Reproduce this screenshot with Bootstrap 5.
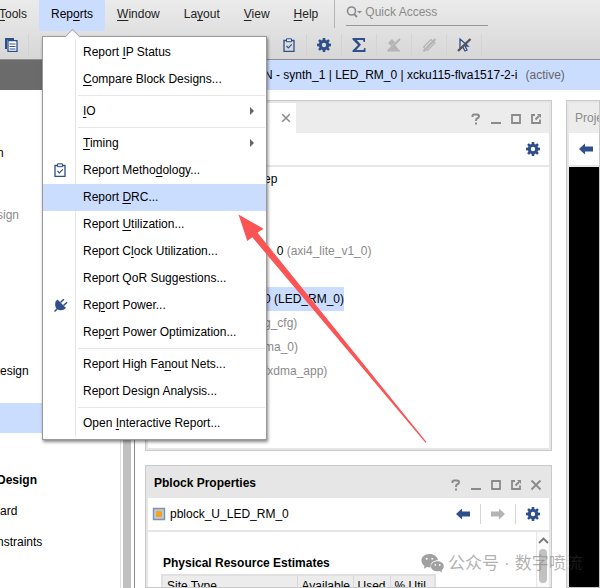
<!DOCTYPE html>
<html lang="en">
<head>
<meta charset="utf-8">
<meta name="viewport" content="width=device-width, initial-scale=1">
<title>Device Design Suite</title>
<link href="https://cdn.jsdelivr.net/npm/bootstrap@5.3.0/dist/css/bootstrap.min.css" rel="stylesheet">
<style>
:root{--sel:#cbddff;--ink:#2f4f8a;--mute:#8a8a8a;--line:#e6e6e6}
body{font:12px/16px "Liberation Sans",Arial,sans-serif;color:#000;background:#fff}
button{font:inherit;color:inherit;background:none;border:0;padding:0}
svg{display:block;flex:none}
u{text-underline-offset:2px}
.topbar{background:linear-gradient(#ebebeb,#d7d7d7);border-bottom:1px solid #8e8e8e}
.menubar{height:31px;margin-left:-13px;color:#222}
.menubar .entry{height:31px;padding:0 12px 3px}
.entry.open{background:var(--sel);color:#000}
.search{width:142px;height:26px;margin-left:11px;padding-bottom:2px;border-bottom:1px solid #999;color:var(--mute)}
.search input{font:inherit;width:110px;border:0;padding:0;background:none;outline:0}
.search input::placeholder{color:var(--mute);opacity:1}
.rule{width:1px;height:28px;background:#b5b5b5}
.tools{height:28px;color:var(--ink)}
.tools button{width:35px;height:22px;border-right:1px solid #d3d3d3;display:flex;align-items:center;justify-content:center}
.tools .off{color:#b4b4b4}
.tools .first{width:29px;padding-right:5px}
.tools .gapfill{width:243px}
.reports-menu{left:3px;top:36px;z-index:20;width:225px;padding:2px 0;background:#fff;border:1px solid #999;box-shadow:1px 2px 3px #0007;color:#000}
.reports-menu::before{content:"";position:absolute;left:24px;top:-6px;width:11px;height:11px;background:#fff;border:solid #aaa;border-width:1px 0 0 1px;transform:rotate(45deg)}
.reports-menu::after{content:"";position:absolute;left:32px;top:2px;bottom:2px;width:1px;background:var(--line)}
.cmd{height:27px;width:100%;padding-bottom:2px!important;display:flex;align-items:center;text-align:left;position:relative;z-index:1}
.cmd .ico{width:33px;color:var(--ink);padding-left:11px}
.cmd .lbl{flex:1;padding-left:7px}
.cmd .sub{margin-right:12px;border:solid transparent;border-width:4px 0 4px 4px;border-left-color:#666}
.cmd.on{background:var(--sel)}
.cut{height:1px;margin:2px 1px 2px 35px;background:var(--line)}
.side{width:121px;border-right:1px solid #ddd}
.side .cap{height:30px;background:#6b6b6b;width:135px}
.step{height:31px;display:flex;align-items:center}
.step.clip{margin-left:-3px}
.step.on{height:30px;background:var(--sel);margin-top:17px}
.s1{margin-top:47px}.s2{margin-top:31px}.s3{margin-top:125px}
.track{width:14px;padding:0 3px 0 2px;border-right:1px solid #8e8e8e}
.track div{background:#c0c0c0;height:100%}
.title{height:30px;background:var(--sel);padding-left:129px}
.title .state{color:#666}
.pane{border:1px solid #c9c9c9;background:var(--line);padding:2px}
.pane .head{height:30px;background:#ececec;color:var(--mute)}
.pane .bar{height:32px;background:#fff;color:var(--ink);padding-right:9px}
.pane .inner{background:#fff;margin-top:2px}
.desk{gap:14px;padding:10px 0 0 10px}
.mid{width:407px;gap:14px}
.netlist{height:351px}
.netlist .tab{width:148px;height:30px;background:#fff;padding-right:5px}
.props .head{background:var(--line);padding-left:6px}
.wins{gap:8px;padding-right:7px}
.netlist .wins{padding-top:3px}
.trow{height:24px;padding-left:116px;display:flex;align-items:center;white-space:pre}
.trow .pick{height:24px;line-height:24px;background:var(--sel)}
.g{color:var(--mute)}
.vr1{width:1px;height:20px;margin:0 10px;background:#d5d5d5}
.fwd{color:#b4b4b4}
.device .head{padding-left:6px}
.device .bar{padding-left:10px}
.device .inner{background:#000}
.facts{padding:23px 0 0 13px}
.facts b{padding-left:2px}
.est{table-layout:fixed;margin-top:3px;border:2px solid #e0e0e0;border-bottom:0;width:275px;background:#ececec}
.est th{font-weight:400;padding:2px 0 0 4px;border-right:1px solid #d8d8d8;white-space:nowrap}
.c1{width:135px}.c2{width:56px}.c3{width:37px}
.sb{width:13px;border-left:1px solid var(--line);background:#fafafa}
.sb div{width:8px;height:34px;border-radius:4px;background:#c1c1c1}
.arrow{left:230px;top:206px;z-index:30;pointer-events:none}
.wm{left:421px;bottom:12px;z-index:25;font:17px/24px "Noto Sans CJK SC",sans-serif;color:#8e8e8eb0;white-space:nowrap}
.wm .dot{padding:0 5px;font-family:"Liberation Sans",sans-serif}
.wm .fade-end{color:#8e8e8e30}
</style>
<script src="https://cdn.jsdelivr.net/npm/bootstrap@5.3.0/dist/js/bootstrap.bundle.min.js"></script>
</head>
<body>
<svg width="0" height="0" class="position-absolute" aria-hidden="true">
<symbol id="gear" viewBox="0 0 14 14"><path fill="currentColor" fill-rule="evenodd" d="M5.8 0h2.4l.3 2 1 .4L11.200 1.200l1.600 1.600L11.600 4.500l.4 1 2 .3v2.400l-2 .3-.4 1 1.200 1.700-1.600 1.600-1.700-1.200-1 .4-.3 2H5.800l-.3-2-1-.4-1.700 1.200-1.600-1.600 1.200-1.700-.4-1-2-.3V5.800l2-.3.4-1L1.200 2.800l1.600-1.600 1.700 1.200 1-.4zM7 4.800a2.200 2.200 0 1 0 0 4.400 2.200 2.200 0 0 0 0-4.400z"/></symbol>
<symbol id="clip" viewBox="0 0 12 14"><path fill="none" stroke="currentColor" stroke-width="1.300" d="M1 2.500h10v10.800H1z"/><path fill="#e8ecf4" stroke="currentColor" d="M3.500.8h5v2.900h-5z"/><path fill="none" stroke="currentColor" stroke-width="1.200" d="M3.500 8l1.800 1.800L8.800 6.300"/></symbol>
<symbol id="back" viewBox="0 0 14 12"><path fill="currentColor" d="M0 6l6-5.500V3.500h8v5H6v3z"/></symbol>
<symbol id="help" viewBox="0 0 12 12"><path fill="none" stroke="currentColor" stroke-width="2" d="M2.500 4V2.500Q2.800 1.500 4 1.500h3Q9 1.700 9 3.300T7 5.500Q6 6 6 8M6 9.500v2"/></symbol>
<symbol id="min" viewBox="0 0 12 12"><path fill="currentColor" d="M1 9h10v2H1z"/></symbol>
<symbol id="max" viewBox="0 0 12 12"><path fill="none" stroke="currentColor" stroke-width="1.800" d="M2 2h8v8H2z"/></symbol>
<symbol id="pop" viewBox="0 0 12 12"><path fill="none" stroke="currentColor" stroke-width="1.800" d="M5 2H2v8h8V6.500M5.500 6.500L9 3"/><path fill="currentColor" d="M7 1h4v4z"/></symbol>
<symbol id="close" viewBox="0 0 12 12"><path fill="none" stroke="currentColor" stroke-width="1.800" d="M1.500 1.500l9 9m0-9l-9 9"/></symbol>
</svg>
<div class="vh-100 d-flex flex-column overflow-hidden position-relative">
<header class="topbar">
<nav class="menubar d-flex" aria-label="Main menu">
<button class="entry"><u>T</u>ools</button>
<div class="position-relative">
<button class="entry open">Rep<u>o</u>rts</button>
<div class="reports-menu position-absolute">
<button class="cmd"><span class="ico"></span><span class="lbl">Report <u>I</u>P Status</span></button>
<button class="cmd"><span class="ico"></span><span class="lbl"><u>C</u>ompare Block Designs...</span></button>
<div class="cut"></div>
<button class="cmd"><span class="ico"></span><span class="lbl"><u>I</u>O</span><span class="sub"></span></button>
<div class="cut"></div>
<button class="cmd"><span class="ico"></span><span class="lbl"><u>T</u>iming</span><span class="sub"></span></button>
<button class="cmd"><span class="ico"><svg width="12" height="14"><use href="#clip"/></svg></span><span class="lbl">Report Metho<u>d</u>ology...</span></button>
<button class="cmd on"><span class="ico"></span><span class="lbl">Report <u>D</u>RC...</span></button>
<button class="cmd"><span class="ico"></span><span class="lbl">Report <u>U</u>tilization...</span></button>
<button class="cmd"><span class="ico"></span><span class="lbl">Report C<u>l</u>ock Utilization...</span></button>
<button class="cmd"><span class="ico"></span><span class="lbl">Report QoR Suggestions...</span></button>
<button class="cmd"><span class="ico"><svg width="14" height="14" viewBox="0 0 14 14"><path fill="currentColor" d="M1.500 3.500L3.500 1.500l8.500 8.500Q9.500 12.500 6.500 12.300 4 12.500 2.300 10.500T1.500 3.500z"/><path stroke="currentColor" stroke-width="1.500" fill="none" d="M3 11L.5 13.500M6.500 4.500L9.800 1.200M9.500 7.500L13 4.200"/></svg></span><span class="lbl">Re<u>p</u>ort Power...</span></button>
<button class="cmd"><span class="ico"></span><span class="lbl">Rep<u>o</u>rt Power Optimization...</span></button>
<div class="cut"></div>
<button class="cmd"><span class="ico"></span><span class="lbl">Report High Fa<u>n</u>out Nets...</span></button>
<button class="cmd"><span class="ico"></span><span class="lbl">Report Design Analysis...</span></button>
<div class="cut"></div>
<button class="cmd"><span class="ico"></span><span class="lbl">Open <u>I</u>nteractive Report...</span></button>
</div>
</div>
<button class="entry"><u>W</u>indow</button>
<button class="entry">La<u>y</u>out</button>
<button class="entry"><u>V</u>iew</button>
<button class="entry"><u>H</u>elp</button>
<div class="rule ms-1"></div>
<label class="search d-flex align-items-center"><svg width="19" height="14" viewBox="0 0 19 14"><circle cx="5.500" cy="6" r="4" fill="none" stroke="currentColor" stroke-width="1.600"/><path stroke="currentColor" stroke-width="1.800" d="M8 9l3 3"/><path fill="currentColor" d="M11 6h5l-2.500 2.500z"/></svg><input type="text" placeholder="Quick Access" aria-label="Quick Access"></label>
</nav>
<div class="tools d-flex align-items-center">
<button class="first" aria-label="Copy"><svg width="13" height="14" viewBox="0 0 13 14"><path fill="currentColor" d="M0 0h9v2H2v9H0z"/><path fill="#fff" stroke="currentColor" stroke-width="1.300" d="M3 2.700h9v10.600H3z"/><path stroke="currentColor" d="M4.500 6h6m-6 2.500h6m-6 2.500h6"/></svg></button>
<div class="gapfill"></div>
<button aria-label="Methodology"><svg width="12" height="14"><use href="#clip"/></svg></button>
<button aria-label="Settings"><svg width="14" height="14"><use href="#gear"/></svg></button>
<button aria-label="Sum"><svg width="14" height="14" viewBox="0 0 14 14"><path fill="currentColor" d="M.5 0h12.500v4h-1.300L11 2H4.800l4.200 4.700L4.300 12H11.500l.8-2h1.200v4H.5v-1.500L6 7 .5 1.500z"/></svg></button>
<button class="off" aria-label="Unmark"><svg width="14" height="14" viewBox="0 0 14 14"><path fill="currentColor" d="M1 5l4-4 3 3-4 4zM8 7l4 5H3z"/><path stroke="currentColor" stroke-width="2" d="M.8 13L13 1"/><path stroke="currentColor" stroke-width="1.500" d="M1 12.800h12"/></svg></button>
<button class="off" aria-label="Unplace"><svg width="15" height="14" viewBox="0 0 15 14"><path fill="none" stroke="currentColor" stroke-width="1.200" d="M1.500 9L9 1.500l4 3.500-7.500 7.500zM5 9l4.500-4.500"/><path stroke="currentColor" stroke-width="2" d="M1.500 13.500L13.500 1"/></svg></button>
<button aria-label="Unselect"><svg width="15" height="14" viewBox="0 0 15 14"><path fill="none" stroke="currentColor" stroke-width="1.300" d="M3 1v10l2.500-2.500L8 13l2-1-2-4h3z"/><path stroke="#555" stroke-width="2.400" d="M1 13L13.500 1"/></svg></button>
</div>
</header>
<div class="d-flex flex-fill overflow-hidden">
<aside class="side overflow-hidden flex-shrink-0">
<div class="cap"></div>
<div class="step clip s1">n</div>
<div class="step clip s2 g">sign</div>
<div class="step s3">esign</div>
<div class="step on"></div>
<div class="step clip s2 fw-bold">Design</div>
<div class="step">ard</div>
<div class="step clip">nstraints</div>
</aside>
<div class="track flex-shrink-0"><div></div></div>
<main class="flex-fill d-flex flex-column overflow-hidden">
<div class="title d-flex align-items-center text-nowrap">N&nbsp;- synth_1 | LED_RM_0 | xcku115-flva1517-2-i<span class="state ms-2">(active)</span></div>
<div class="desk d-flex flex-fill overflow-hidden">
<div class="mid d-flex flex-column flex-shrink-0">
<section class="pane netlist d-flex flex-column flex-shrink-0">
<div class="head d-flex justify-content-between"><div class="tab d-flex align-items-center justify-content-end"><button aria-label="Close tab"><svg width="10" height="10"><use href="#close"/></svg></button></div>
<div class="wins d-flex align-items-center"><button aria-label="Help"><svg width="12" height="12"><use href="#help"/></svg></button><button aria-label="Minimize"><svg width="12" height="12"><use href="#min"/></svg></button><button aria-label="Maximize"><svg width="12" height="12"><use href="#max"/></svg></button><button aria-label="Float"><svg width="12" height="12"><use href="#pop"/></svg></button></div></div>
<div class="bar d-flex align-items-center justify-content-end"><button aria-label="Settings"><svg width="14" height="14"><use href="#gear"/></svg></button></div>
<div class="inner flex-fill">
<div class="trow">ep</div>
<div class="trow"></div><div class="trow"></div>
<div class="trow">c_0 <span class="g">(axi4_lite_v1_0)</span></div>
<div class="trow"></div>
<div class="trow"><span class="pick">0 (LED_RM_0)</span></div>
<div class="trow g">g_cfg)</div>
<div class="trow g">ma_0)</div>
<div class="trow g">/xdma_app)</div>
</div>
</section>
<section class="pane props d-flex flex-column flex-fill overflow-hidden pb-0">
<div class="head d-flex flex-shrink-0 align-items-center justify-content-between"><b class="text-black">Pblock Properties</b>
<div class="wins d-flex pt-1"><button aria-label="Help"><svg width="12" height="12"><use href="#help"/></svg></button><button aria-label="Minimize"><svg width="12" height="12"><use href="#min"/></svg></button><button aria-label="Maximize"><svg width="12" height="12"><use href="#max"/></svg></button><button aria-label="Float"><svg width="12" height="12"><use href="#pop"/></svg></button><button aria-label="Close"><svg width="12" height="12"><use href="#close"/></svg></button></div></div>
<div class="bar d-flex flex-shrink-0 align-items-center ps-1"><svg width="14" height="14" viewBox="0 0 14 14"><path fill="#b8cbe0" stroke="#7f93a8" stroke-width="1.400" d="M1.500 1.500h11v11h-11z"/><path fill="#f9a11b" d="M4 4h6v6H4z"/></svg><span class="text-black ms-1 flex-fill">pblock_U_LED_RM_0</span>
<button aria-label="Back"><svg width="14" height="12"><use href="#back"/></svg></button><span class="vr1"></span><button class="fwd" aria-label="Forward"><svg width="14" height="12" viewBox="0 0 14 12"><path fill="currentColor" d="M14 6L8 .5v3H0v5h8v3z"/></svg></button><span class="vr1"></span><button aria-label="Settings"><svg width="14" height="14"><use href="#gear"/></svg></button></div>
<div class="inner d-flex flex-fill overflow-hidden">
<div class="facts flex-fill"><b class="d-block">Physical Resource Estimates</b>
<table class="est"><thead><tr><th class="c1">Site Type</th><th class="c2">Available</th><th class="c3">Used</th><th>% Util</th></tr></thead></table></div>
<div class="sb d-flex flex-column align-items-center"><svg class="my-1" width="11" height="9" viewBox="0 0 11 9"><path fill="none" stroke="#777" stroke-width="1.800" d="M1 7l4.500-4.500L10 7"/></svg><div></div></div>
</div>
</section>
</div>
<section class="pane device flex-fill d-flex flex-column pe-0 pb-0 overflow-hidden">
<div class="head d-flex align-items-center text-nowrap">Project Summary</div>
<div class="bar d-flex align-items-center"><button aria-label="Back"><svg width="14" height="12"><use href="#back"/></svg></button></div>
<div class="inner flex-fill"></div>
</section>
</div>
</main>
</div>
<svg class="arrow position-absolute" width="200" height="240" viewBox="230 206 200 240"><path fill="#fb5454" d="M238.500 214.500L263.500 228.700 257.500 232.700 426.500 442 425.500 442.700 252.300 237.300 247.300 241z"/></svg>
<div class="wm position-absolute d-flex align-items-center"><svg width="23" height="19" viewBox="0 0 23 19"><path fill="#a0a0a0" fill-rule="evenodd" d="M8.500 0C13 0 16.500 2.700 17 6.300 12.500 6.300 9 9 9.700 13.400L6 13 2.800 14.800l.7-2.900C-2.200 7.500.5 0 8.500 0zM5.700 3.800a1 1 0 1 0 0 2 1 1 0 0 0 0-2zm5.600 0a1 1 0 1 0 0 2 1 1 0 0 0 0-2z"/><path fill="#a0a0a0" fill-rule="evenodd" d="M16.500 7.200c6 0 8.500 5.600 4 9l.5 2.300-2.600-1.400C13 18 10 15.500 10 12.300c0-2.900 3-5.100 6.500-5.100zM14.300 10a.9.900 0 1 0 0 1.800.9.900 0 0 0 0-1.800zm4.400 0a.9.900 0 1 0 0 1.800.9.900 0 0 0 0-1.800z"/></svg><span class="ms-1">公众号<span class="dot">·</span>数字喷<span class="fade-end">流</span></span></div>
</div>
</body>
</html>
